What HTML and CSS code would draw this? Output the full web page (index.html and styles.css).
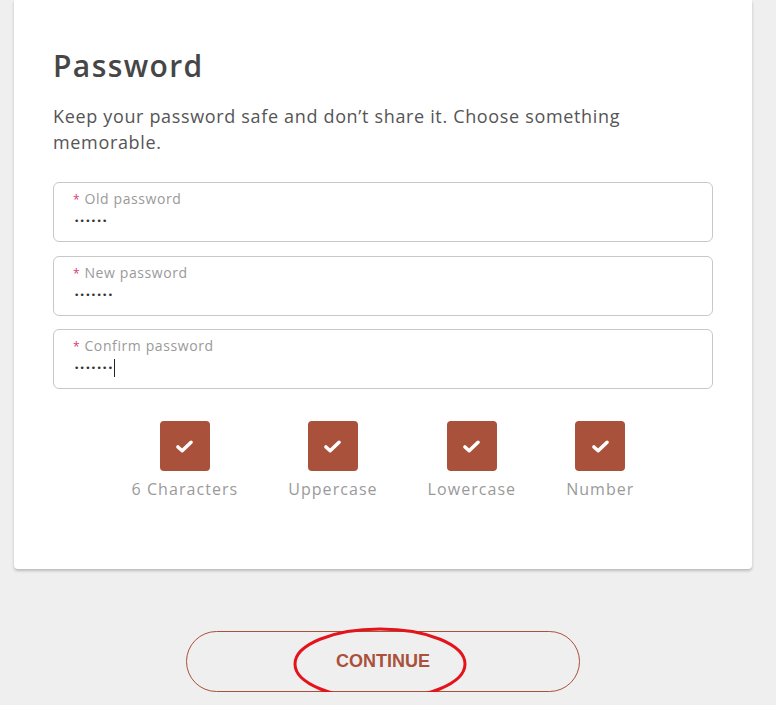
FILE: index.html
```html
<!DOCTYPE html>
<html lang="en">
<head>
<meta charset="utf-8">
<title>Password</title>
<link rel="stylesheet" href="styles.css">
</head>
<body>
<main class="page">
  <section class="card">
    <h1 class="title">Password</h1>
    <p class="intro">Keep your password safe and don’t share it. Choose something memorable.</p>

    <div class="field">
      <div class="label"><span class="req">*</span> Old password</div>
      <div class="value"><span class="dots">••••••</span></div>
    </div>
    <div class="field">
      <div class="label"><span class="req">*</span> New password</div>
      <div class="value"><span class="dots">•••••••</span></div>
    </div>
    <div class="field">
      <div class="label"><span class="req">*</span> Confirm password</div>
      <div class="value"><span class="dots">•••••••</span><span class="caret"></span></div>
    </div>

    <ul class="rules">
      <li class="rule">
        <span class="box"><svg viewBox="0 0 20 16" width="19" height="15"><polyline points="3,8.5 7.5,12.5 17,3.5" /></svg></span>
        <span class="rule-label">6 Characters</span>
      </li>
      <li class="rule">
        <span class="box"><svg viewBox="0 0 20 16" width="19" height="15"><polyline points="3,8.5 7.5,12.5 17,3.5" /></svg></span>
        <span class="rule-label">Uppercase</span>
      </li>
      <li class="rule">
        <span class="box"><svg viewBox="0 0 20 16" width="19" height="15"><polyline points="3,8.5 7.5,12.5 17,3.5" /></svg></span>
        <span class="rule-label">Lowercase</span>
      </li>
      <li class="rule">
        <span class="box"><svg viewBox="0 0 20 16" width="19" height="15"><polyline points="3,8.5 7.5,12.5 17,3.5" /></svg></span>
        <span class="rule-label">Number</span>
      </li>
    </ul>
  </section>

  <div class="actions">
    <button class="continue" type="button">CONTINUE</button>
    <svg class="annotation" viewBox="0 0 180 76" width="180" height="76"><ellipse cx="90" cy="38" rx="85" ry="35" /></svg>
  </div>
</main>
</body>
</html>
```
FILE: styles.css
```css
html, body {
  margin: 0;
  padding: 0;
}
body {
  background: #efefef;
  font-family: "Open Sans", "Liberation Sans", sans-serif;
  color: #555;
}
.page {
  width: 738px;
  margin-left: 14px;
}
.card {
  background: #fff;
  border-radius: 0 0 4px 4px;
  box-shadow: 0 2px 3px rgba(0, 0, 0, 0.22);
  padding: 47px 39px 70px 39px;
}
.title {
  margin: 0;
  font-size: 30px;
  line-height: 38px;
  font-weight: 600;
  letter-spacing: 1.4px;
  color: #464646;
}
.intro {
  margin: 18px 0 27px;
  max-width: 640px;
  font-size: 18px;
  line-height: 26px;
  letter-spacing: 0.66px;
  color: #555;
}
.field {
  box-sizing: border-box;
  height: 60px;
  border: 1px solid #c8c8c8;
  border-radius: 6px;
  padding: 7px 19px 0;
  margin-bottom: 14px;
}
.field:nth-of-type(2) {
  margin-bottom: 13px;
}
.label {
  font-size: 14px;
  line-height: 18px;
  letter-spacing: 0.6px;
  color: #9a9a9a;
}
.req {
  color: #d63a77;
  font-size: 12px;
}
.value {
  display: flex;
  align-items: center;
  height: 24px;
  padding-left: 1px;
}
.dots {
  font-size: 9px;
  letter-spacing: 0.3px;
  color: #333;
  font-family: "DejaVu Sans", sans-serif;
}
.caret {
  width: 1px;
  height: 18px;
  background: #222;
  margin-left: 1px;
}
.rules {
  list-style: none;
  margin: 32px 0 0;
  padding: 0;
  display: flex;
  justify-content: center;
  gap: 50px;
}
.rule {
  display: flex;
  flex-direction: column;
  align-items: center;
  gap: 8px;
}
.box {
  width: 50px;
  height: 50px;
  border-radius: 4px;
  background: #a9513a;
  display: flex;
  align-items: center;
  justify-content: center;
}
.box svg polyline {
  fill: none;
  stroke: #fff;
  stroke-width: 3.8;
  stroke-linecap: round;
  stroke-linejoin: round;
}
.rule-label {
  font-size: 16px;
  line-height: 20px;
  letter-spacing: 1.05px;
  color: #9a9a9a;
}
.actions {
  position: relative;
  display: flex;
  justify-content: center;
  padding-top: 62px;
}
.continue {
  width: 394px;
  height: 61px;
  border: 1px solid #a9513a;
  border-radius: 31px;
  background: transparent;
  color: #a9513a;
  font-family: "Liberation Sans", Arial, sans-serif;
  font-weight: 700;
  font-size: 18px;
}
.annotation {
  position: absolute;
  left: 276px;
  top: 57px;
  overflow: visible;
}
.annotation ellipse {
  fill: none;
  stroke: #e3141c;
  stroke-width: 3;
}
```
